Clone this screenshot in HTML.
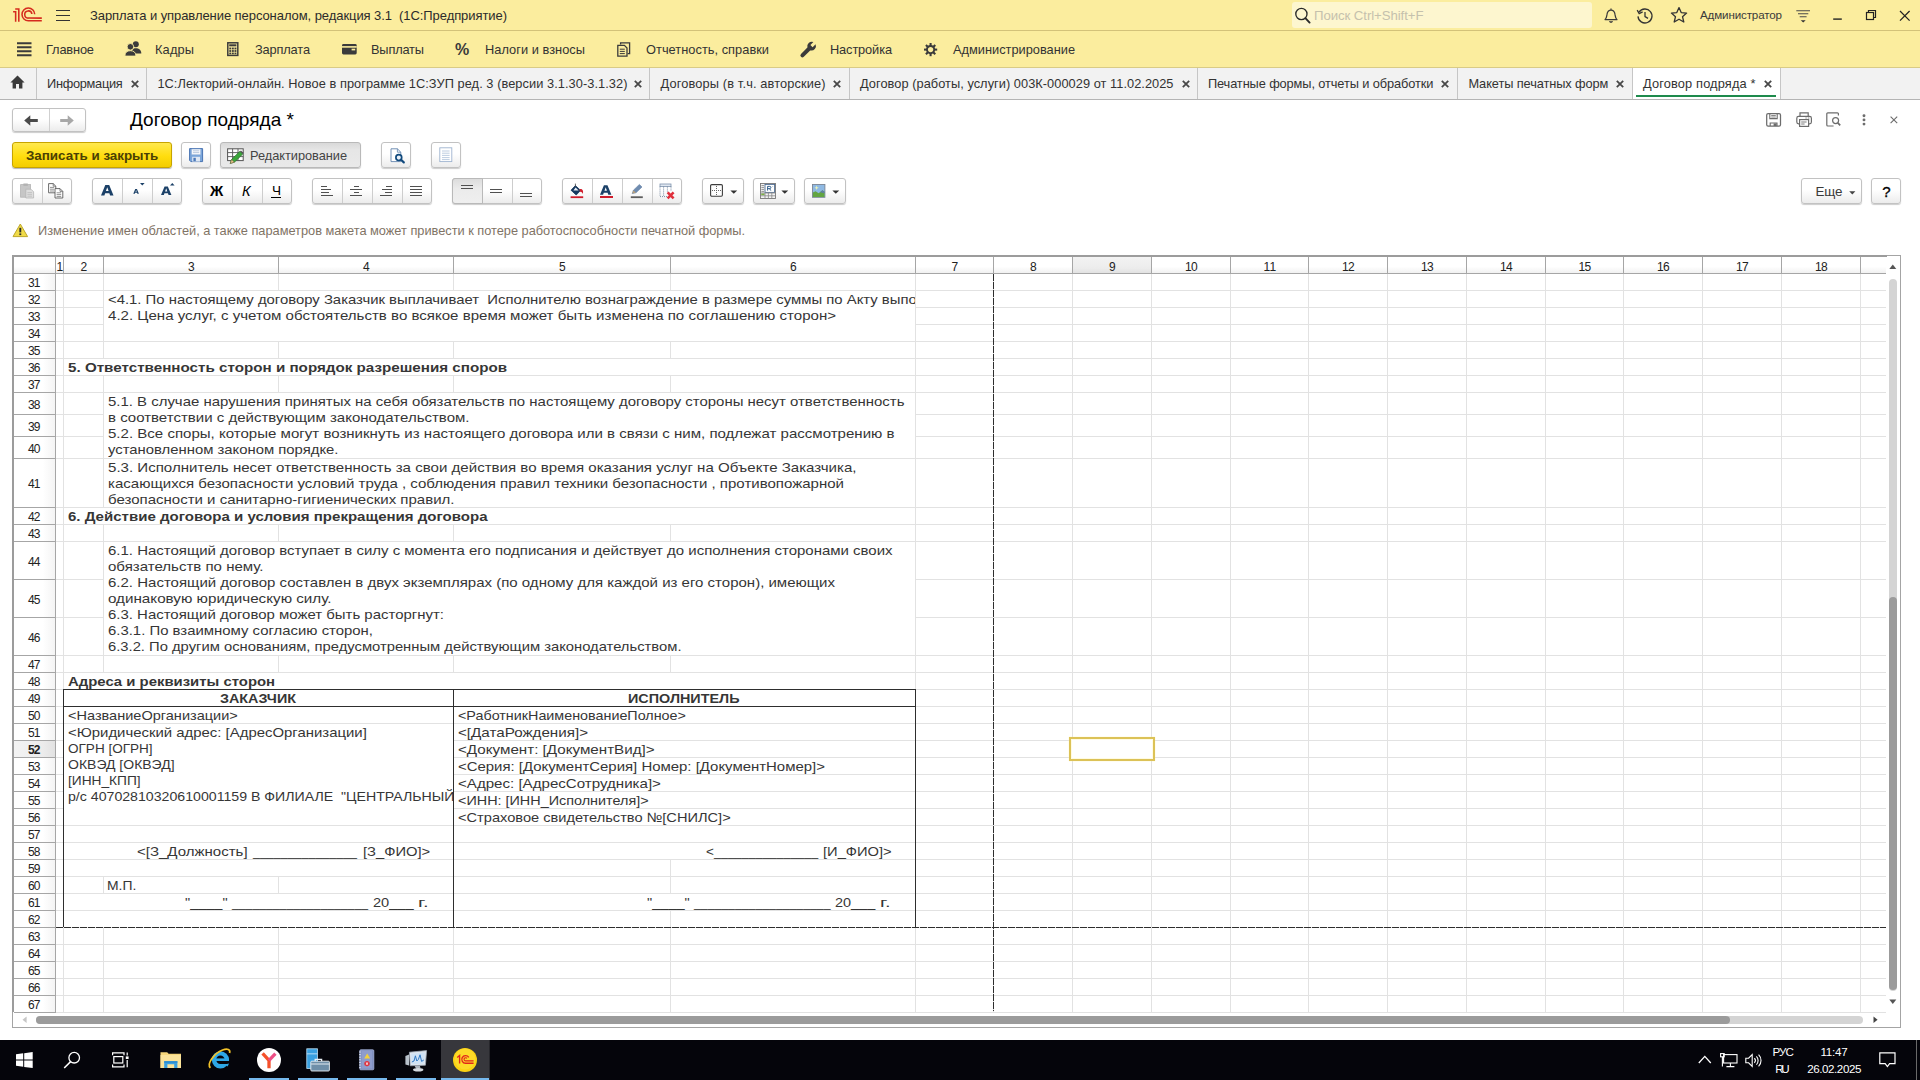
<!DOCTYPE html>
<html lang="ru"><head><meta charset="utf-8"><title>Договор подряда * - 1С:Предприятие</title>
<style>
html,body{margin:0;padding:0;width:1920px;height:1080px;overflow:hidden;background:#fff;font-family:"Liberation Sans",sans-serif;}
.t{position:absolute;white-space:pre;line-height:16px;font-family:"Liberation Sans",sans-serif;}
.btn{box-sizing:border-box;border:1px solid #c2c2c2;border-radius:3px;background:linear-gradient(#ffffff,#ffffff 45%,#ececec);box-shadow:0 1px 1px rgba(0,0,0,.2);}
.sep{position:absolute;width:1px;background:#c9c9c9;}
svg{overflow:visible}
.g i{position:absolute;display:block}

</style></head>
<body>
<div style="position:absolute;left:0px;top:0px;width:1920px;height:68px;background:#fbed9e;"></div>
<div style="position:absolute;left:0px;top:30px;width:1920px;height:1px;background:#d3c279;"></div>
<div style="position:absolute;left:0px;top:67px;width:1920px;height:1px;background:#d9cb86;"></div>
<svg style="position:absolute;left:0px;top:0px;" width="50" height="30" viewBox="0 0 50 30"><g fill="none" stroke="#d52b1e" stroke-width="1.55">
<path d="M13.1 11.8 H15.65 V21.8"/>
<path d="M15.2 9 H18.8 V21.8"/>
<path d="M34.7 14.2 A6.35 6.35 0 1 0 28.4 20.75 H41.8"/>
<path d="M31.9 14 A3.6 3.6 0 1 0 28.4 18.1 H41.8"/></g></svg>
<svg style="position:absolute;left:56px;top:9px;" width="15" height="13" viewBox="0 0 15 13"><g stroke="#333" stroke-width="1.2"><path d="M0 1.5H14M0 6.5H14M0 11.5H14"/></g></svg>
<span class="t" style="left:90.00px;top:8px;font-size:13px;color:#2b2b2b;letter-spacing:-0.069px;">Зарплата и управление персоналом, редакция 3.1  (1С:Предприятие)</span>
<div style="position:absolute;left:1292px;top:2px;width:300px;height:26px;background:#fdf6cf;border-radius:3px;"></div>
<svg style="position:absolute;left:1294px;top:6px;" width="18" height="18" viewBox="0 0 18 18"><circle cx="7.4" cy="8" r="5.6" fill="none" stroke="#2a2a2a" stroke-width="1.35"/><path d="M11.4 12.2 L15.6 16.6" stroke="#2a2a2a" stroke-width="1.9" stroke-linecap="round"/></svg>
<span class="t" style="left:1314.00px;top:8px;font-size:13.2px;color:#c5c1ad;letter-spacing:-0.062px;">Поиск Ctrl+Shift+F</span>
<svg style="position:absolute;left:1602px;top:6px;" width="18" height="19" viewBox="0 0 18 19"><path d="M9 2.6 V4 M3 13.6 C4.8 12 4.6 10.2 5 8.4 C5.4 5.6 7 4.2 9 4.2 C11 4.2 12.6 5.6 13 8.4 C13.4 10.2 13.2 12 15 13.6 Z" fill="none" stroke="#3a3a3a" stroke-width="1.25" stroke-linejoin="round"/><path d="M7.2 15.6 H10.8 L9 16.8 Z" fill="#3a3a3a" stroke="#3a3a3a" stroke-width="0.6"/></svg>
<svg style="position:absolute;left:1636px;top:7.2px;" width="18" height="18" viewBox="0 0 18 18"><path d="M3.1 5.2 A7 7 0 1 1 2 9.4" fill="none" stroke="#333" stroke-width="1.3"/><path d="M1.2 3.2 L3.2 6.6 L6.6 4.9" fill="none" stroke="#333" stroke-width="1.3"/><path d="M9 5 V9.6 L12 11.4" fill="none" stroke="#333" stroke-width="1.3"/></svg>
<svg style="position:absolute;left:1670px;top:6.2px;" width="18" height="18" viewBox="0 0 18 18"><path d="M9 1.6 L11.2 6.6 L16.6 7.1 L12.5 10.7 L13.8 16 L9 13.2 L4.2 16 L5.5 10.7 L1.4 7.1 L6.8 6.6 Z" fill="none" stroke="#333" stroke-width="1.3" stroke-linejoin="round"/></svg>
<span class="t" style="left:1700.00px;top:7px;font-size:11.6px;color:#3a3a3a;letter-spacing:-0.138px;">Администратор</span>
<svg style="position:absolute;left:1795px;top:8px;" width="17" height="16" viewBox="0 0 17 16"><path d="M1.3 2.7H15M3 5.8H13.3M4.7 8.8H11.6" stroke="#4a4a4a" stroke-width="1.1"/><path d="M5.7 12.2 H10.7 L8.2 14.6 Z" fill="#333"/></svg>
<svg style="position:absolute;left:1832px;top:9.2px;" width="12" height="12" viewBox="0 0 12 12"><path d="M1.2 10.1H9.8" stroke="#222" stroke-width="1.4"/></svg>
<svg style="position:absolute;left:1865.4px;top:9.4px;" width="12" height="12" viewBox="0 0 12 12"><path d="M3.5 3.5V1.5H10.5V8.5H8.5" fill="none" stroke="#222" stroke-width="1.2"/><rect x="1.5" y="3.5" width="7" height="7" fill="none" stroke="#222" stroke-width="1.2"/></svg>
<svg style="position:absolute;left:1899.4px;top:9.6px;" width="12" height="12" viewBox="0 0 12 12"><path d="M1 1L10.6 10.6M10.6 1L1 10.6" stroke="#222" stroke-width="1.25"/></svg>
<svg style="position:absolute;left:17px;top:42px;" width="15" height="14" viewBox="0 0 15 14"><path d="M0 1.2H14.5M0 5.2H14.5M0 9.2H14.5M0 13.2H14.5" stroke="#3b3b3b" stroke-width="1.9"/></svg>
<span class="t" style="left:46.00px;top:42px;font-size:12.8px;color:#333;letter-spacing:-0.151px;">Главное</span>
<svg style="position:absolute;left:120px;top:38px;" width="24" height="20" viewBox="0 0 24 20"><g fill="#3b3b3b"><circle cx="15.8" cy="6.2" r="3"/><path d="M11.4 15.5 C11.4 11.8 13 10.2 15.8 10.2 C18.8 10.2 21.3 11.8 21.3 15.5 Z"/><g stroke="#fbed9e" stroke-width="0.9"><circle cx="10.4" cy="8.8" r="3.3"/><path d="M4.9 18.1 C4.9 14.4 7 12.7 10.4 12.7 C13.8 12.7 15.9 14.4 15.9 18.1 Z"/></g></g></svg>
<span class="t" style="left:155.00px;top:42px;font-size:12.8px;color:#333;letter-spacing:0.160px;">Кадры</span>
<svg style="position:absolute;left:227px;top:42px;" width="12" height="15" viewBox="0 0 12 15"><rect x="0.8" y="0.8" width="10" height="12.6" fill="none" stroke="#3b3b3b" stroke-width="1.5"/><rect x="2.2" y="2.3" width="7.2" height="2" fill="#3b3b3b"/><g fill="#3b3b3b"><rect x="2.3" y="5.6" width="1.9" height="1.8"/><rect x="4.9" y="5.6" width="1.9" height="1.8"/><rect x="7.5" y="5.6" width="1.9" height="1.8"/><rect x="2.3" y="8.1" width="1.9" height="1.8"/><rect x="4.9" y="8.1" width="1.9" height="1.8"/><rect x="7.5" y="8.1" width="1.9" height="1.8"/><rect x="2.3" y="10.6" width="1.9" height="1.6"/><rect x="4.9" y="10.6" width="1.9" height="1.6"/><rect x="7.5" y="10.6" width="1.9" height="1.6"/></g></svg>
<span class="t" style="left:255.00px;top:42px;font-size:12.8px;color:#333;letter-spacing:-0.147px;">Зарплата</span>
<svg style="position:absolute;left:341.6px;top:44px;" width="16" height="11" viewBox="0 0 16 11"><rect x="0" y="0" width="14.7" height="10.4" rx="1.4" fill="#3b3b3b"/><rect x="0" y="2.1" width="14.7" height="1.6" fill="#fbed9e"/><rect x="9.6" y="4.7" width="3.6" height="1.7" fill="#fbed9e"/></svg>
<span class="t" style="left:371.00px;top:42px;font-size:12.8px;color:#333;letter-spacing:-0.172px;">Выплаты</span>
<span class="t" style="left:455.00px;top:42px;font-size:16px;color:#3b3b3b;font-weight:bold;">%</span>
<span class="t" style="left:485.00px;top:42px;font-size:12.8px;color:#333;letter-spacing:0.038px;">Налоги и взносы</span>
<svg style="position:absolute;left:617px;top:42px;" width="14" height="15" viewBox="0 0 14 15"><g fill="none" stroke="#3b3b3b" stroke-width="1.3"><path d="M3.6 2.6 V0.8 H12.6 V11.6 H10.6"/><path d="M0.8 3.4 H7.4 L10 6 V14.2 H0.8 Z"/><path d="M2.8 7.2H7.8M2.8 9.4H7.8M2.8 11.6H7.8" stroke-width="1"/></g></svg>
<span class="t" style="left:646.00px;top:42px;font-size:12.8px;color:#333;letter-spacing:0.035px;">Отчетность, справки</span>
<svg style="position:absolute;left:800px;top:41px;" width="17" height="17" viewBox="0 0 17 17"><path d="M15.6 3.2 L12.6 6.2 L10.4 4 L13.4 1 A4.6 4.6 0 0 0 7.4 6.6 L1 13 A1.8 1.8 0 0 0 3.8 15.8 L10.2 9.4 A4.6 4.6 0 0 0 15.6 3.2 Z" fill="#3b3b3b"/></svg>
<span class="t" style="left:830.00px;top:42px;font-size:12.8px;color:#333;letter-spacing:-0.125px;">Настройка</span>
<svg style="position:absolute;left:924.4px;top:43px;" width="13.2" height="13.2" viewBox="0 0 16.6 16.6"><rect x="7" y="0" width="2.6" height="4" fill="#3b3b3b" transform="rotate(0 8.3 8.3)"/><rect x="7" y="0" width="2.6" height="4" fill="#3b3b3b" transform="rotate(45 8.3 8.3)"/><rect x="7" y="0" width="2.6" height="4" fill="#3b3b3b" transform="rotate(90 8.3 8.3)"/><rect x="7" y="0" width="2.6" height="4" fill="#3b3b3b" transform="rotate(135 8.3 8.3)"/><rect x="7" y="0" width="2.6" height="4" fill="#3b3b3b" transform="rotate(180 8.3 8.3)"/><rect x="7" y="0" width="2.6" height="4" fill="#3b3b3b" transform="rotate(225 8.3 8.3)"/><rect x="7" y="0" width="2.6" height="4" fill="#3b3b3b" transform="rotate(270 8.3 8.3)"/><rect x="7" y="0" width="2.6" height="4" fill="#3b3b3b" transform="rotate(315 8.3 8.3)"/><circle cx="8.3" cy="8.3" r="4.6" fill="none" stroke="#3b3b3b" stroke-width="2.4"/></svg>
<span class="t" style="left:953.00px;top:42px;font-size:12.8px;color:#333;letter-spacing:-0.002px;">Администрирование</span>
<div style="position:absolute;left:0px;top:68px;width:1920px;height:31px;background:#f2f2f2;"></div>
<div style="position:absolute;left:0px;top:99px;width:1920px;height:1px;background:#b4b4b4;"></div>
<div style="position:absolute;left:36px;top:68px;width:1px;height:31px;background:#c6c6c6;"></div>
<div style="position:absolute;left:146px;top:68px;width:1px;height:31px;background:#c6c6c6;"></div>
<div style="position:absolute;left:649px;top:68px;width:1px;height:31px;background:#c6c6c6;"></div>
<div style="position:absolute;left:849px;top:68px;width:1px;height:31px;background:#c6c6c6;"></div>
<div style="position:absolute;left:1197px;top:68px;width:1px;height:31px;background:#c6c6c6;"></div>
<div style="position:absolute;left:1457px;top:68px;width:1px;height:31px;background:#c6c6c6;"></div>
<div style="position:absolute;left:1632px;top:68px;width:1px;height:31px;background:#c6c6c6;"></div>
<div style="position:absolute;left:1780px;top:68px;width:1px;height:31px;background:#c6c6c6;"></div>
<div style="position:absolute;left:1633px;top:68px;width:147px;height:31px;background:#ffffff;"></div>
<div style="position:absolute;left:1636px;top:95px;width:140px;height:2px;background:#1e8a4c;"></div>
<svg style="position:absolute;left:10px;top:75px;" width="15" height="14" viewBox="0 0 15 14"><path d="M7.5 0.6 L0.4 7.4 H2.6 V13.4 H6 V9 H9 V13.4 H12.4 V7.4 H14.6 Z" fill="#3b3b3b"/></svg>
<span class="t" style="left:47.10px;top:76px;font-size:12.8px;color:#333;letter-spacing:-0.307px;">Информация</span>
<svg style="position:absolute;left:130.7px;top:79.5px;" width="8" height="8" viewBox="0 0 8 8"><path d="M0.8 0.8L7.2 7.2M7.2 0.8L0.8 7.2" stroke="#484848" stroke-width="1.8"/></svg>
<span class="t" style="left:157.40px;top:76px;font-size:12.8px;color:#333;letter-spacing:0.056px;">1С:Лекторий-онлайн. Новое в программе 1С:ЗУП ред. 3 (версии 3.1.30-3.1.32)</span>
<svg style="position:absolute;left:634px;top:79.5px;" width="8" height="8" viewBox="0 0 8 8"><path d="M0.8 0.8L7.2 7.2M7.2 0.8L0.8 7.2" stroke="#484848" stroke-width="1.8"/></svg>
<span class="t" style="left:660.60px;top:76px;font-size:12.8px;color:#333;letter-spacing:0.132px;">Договоры (в т.ч. авторские)</span>
<svg style="position:absolute;left:833.3px;top:79.5px;" width="8" height="8" viewBox="0 0 8 8"><path d="M0.8 0.8L7.2 7.2M7.2 0.8L0.8 7.2" stroke="#484848" stroke-width="1.8"/></svg>
<span class="t" style="left:860.00px;top:76px;font-size:12.8px;color:#333;letter-spacing:0.040px;">Договор (работы, услуги) 003К-000029 от 11.02.2025</span>
<svg style="position:absolute;left:1181.5px;top:79.5px;" width="8" height="8" viewBox="0 0 8 8"><path d="M0.8 0.8L7.2 7.2M7.2 0.8L0.8 7.2" stroke="#484848" stroke-width="1.8"/></svg>
<span class="t" style="left:1207.90px;top:76px;font-size:12.8px;color:#333;letter-spacing:-0.103px;">Печатные формы, отчеты и обработки</span>
<svg style="position:absolute;left:1441.4px;top:79.5px;" width="8" height="8" viewBox="0 0 8 8"><path d="M0.8 0.8L7.2 7.2M7.2 0.8L0.8 7.2" stroke="#484848" stroke-width="1.8"/></svg>
<span class="t" style="left:1468.40px;top:76px;font-size:12.8px;color:#333;letter-spacing:-0.091px;">Макеты печатных форм</span>
<svg style="position:absolute;left:1616.4px;top:79.5px;" width="8" height="8" viewBox="0 0 8 8"><path d="M0.8 0.8L7.2 7.2M7.2 0.8L0.8 7.2" stroke="#484848" stroke-width="1.8"/></svg>
<span class="t" style="left:1643.00px;top:76px;font-size:12.8px;color:#333;letter-spacing:0.147px;">Договор подряда *</span>
<svg style="position:absolute;left:1763.5px;top:79.5px;" width="8" height="8" viewBox="0 0 8 8"><path d="M0.8 0.8L7.2 7.2M7.2 0.8L0.8 7.2" stroke="#484848" stroke-width="1.8"/></svg>
<div class="btn" style="position:absolute;left:12px;top:108px;width:74px;height:24px;"></div>
<div style="position:absolute;left:49px;top:109px;width:1px;height:22px;background:#d0d0d0;"></div>
<svg style="position:absolute;left:0px;top:0px;" width="100" height="140" viewBox="0 0 100 140"><path d="M24.2 120.5 L30.3 115.2 V119 H37.8 V122 H30.3 V125.8 Z" fill="#4a4a4a"/><path d="M73.8 120.5 L67.7 115.2 V119 H60.2 V122 H67.7 V125.8 Z" fill="#a8a8a8"/></svg>
<span class="t" style="left:130.00px;top:112px;font-size:19px;color:#000;letter-spacing:0.030px;">Договор подряда *</span>
<svg style="position:absolute;left:1766px;top:113px;" width="16" height="14" viewBox="0 0 16 14"><rect x="0.7" y="0.7" width="13.8" height="12.4" rx="1.4" fill="none" stroke="#6c6c6c" stroke-width="1.25"/><path d="M3.8 0.9 V5.6 H11.2 V0.9" fill="none" stroke="#6c6c6c" stroke-width="1.1"/><path d="M5.2 2.5H9.8M5.2 4H9.8" stroke="#6c6c6c" stroke-width="0.8"/><path d="M4.2 13 V10 H11 V13" fill="none" stroke="#6c6c6c" stroke-width="1.1"/><rect x="7.6" y="10.4" width="3" height="2.6" fill="#6c6c6c"/></svg>
<svg style="position:absolute;left:1796px;top:112px;" width="17" height="15" viewBox="0 0 17 15"><g fill="none" stroke="#6c6c6c" stroke-width="1.2"><path d="M4 4.6 V0.8 H12.2 V4.6"/><rect x="0.8" y="4.4" width="14.6" height="7.4" rx="1.8"/><rect x="3.6" y="7.6" width="9" height="6.8" fill="#fff"/><path d="M5.2 10H10.6M5.2 12H8.6" stroke-width="0.9"/><path d="M9.4 6H10.8M11.8 6H13.4" stroke-width="0.8"/></g></svg>
<svg style="position:absolute;left:1826px;top:112px;" width="16" height="15" viewBox="0 0 16 15"><g fill="none" stroke="#6c6c6c" stroke-width="1.2"><path d="M12.4 3.6 V1.8 Q12.4 0.8 11.4 0.8 H1.8 Q0.8 0.8 0.8 1.8 V13 Q0.8 14 1.8 14 H7.6"/><circle cx="9.6" cy="8.6" r="3"/><path d="M11.8 10.8 L14.2 13.4" stroke-width="1.7"/></g></svg>
<svg style="position:absolute;left:1861.6px;top:113.6px;" width="4" height="13" viewBox="0 0 4 13"><circle cx="2" cy="1.7" r="1.45" fill="#6c6c6c"/><circle cx="2" cy="5.9" r="1.45" fill="#6c6c6c"/><circle cx="2" cy="10.1" r="1.45" fill="#6c6c6c"/></svg>
<svg style="position:absolute;left:1889.6px;top:115.6px;" width="8" height="8" viewBox="0 0 8 8"><path d="M0.6 0.6L7.2 7.2M7.2 0.6L0.6 7.2" stroke="#6c6c6c" stroke-width="1.1"/></svg>
<div style="position:absolute;left:12px;top:142px;width:160px;height:26px;border:1px solid #c7a400;border-radius:3px;box-sizing:border-box;background:linear-gradient(#ffe94f,#ffdd0e 55%,#f3cd00);box-shadow:0 1px 1px rgba(0,0,0,.3);"></div>
<span class="t" style="left:26.00px;top:148px;font-size:13.4px;color:#4a4004;letter-spacing:-0.025px;font-weight:bold;">Записать и закрыть</span>
<div class="btn" style="position:absolute;left:181px;top:142px;width:30px;height:26px;"></div>
<svg style="position:absolute;left:189.2px;top:148px;" width="15" height="15" viewBox="0 0 15 15"><path d="M0.6 0.6 H13.6 V13.6 H1.8 L0.6 12.4 Z" fill="#7ba6da" stroke="#4873b2" stroke-width="1"/><rect x="2.8" y="1.1" width="8.6" height="5.4" fill="#f7f9fc" stroke="#b4c6df" stroke-width="0.5"/><path d="M4 2.8H10.2M4 4.6H10.2" stroke="#a9bcd6" stroke-width="0.8"/><rect x="3.2" y="8.8" width="7.8" height="4.8" fill="#dfe8f4"/><rect x="4.4" y="9.8" width="2.4" height="3.4" fill="#4d79b8"/></svg>
<div style="position:absolute;left:220px;top:142px;width:141px;height:26px;border:1px solid #b9b9b9;border-radius:3px;box-sizing:border-box;background:linear-gradient(#d9d9d9,#e6e6e6 30%,#e9e9e9);box-shadow:0 1px 1px rgba(0,0,0,.22);"></div>
<svg style="position:absolute;left:227px;top:148px;" width="17" height="16" viewBox="0 0 17 16"><rect x="0.6" y="0.8" width="15.6" height="11.8" fill="#fff" stroke="#555" stroke-width="1"/><path d="M0.6 4.6H16.2M0.6 8.6H16.2M5.6 0.8V12.6M11 0.8V12.6" stroke="#555" stroke-width="0.9"/><path d="M3.2 15.4 L4.6 11.4 L13 3.2 L15.8 6 L7.4 14.2 Z" fill="#3aa63a" stroke="#2c6b2c" stroke-width="0.7"/><path d="M3.2 15.4 L4.6 11.4 L7.4 14.2 Z" fill="#e8c38a" stroke="#6d5a3a" stroke-width="0.5"/><path d="M13 3.2 L15.8 6 L16.6 5 L14 2.4 Z" fill="#555"/></svg>
<span class="t" style="left:250.00px;top:148px;font-size:12.8px;color:#444;letter-spacing:-0.037px;">Редактирование</span>
<div class="btn" style="position:absolute;left:381px;top:142px;width:30px;height:26px;"></div>
<svg style="position:absolute;left:389.6px;top:147.6px;" width="16" height="16" viewBox="0 0 16 16"><path d="M1 0.8 H7.4 L10.8 4.2 V13.6 H1 Z" fill="#fff" stroke="#6385ad" stroke-width="0.9"/><path d="M7.4 0.8 V4.2 H10.8" fill="none" stroke="#6385ad" stroke-width="0.8"/><circle cx="8.8" cy="9.6" r="2.9" fill="#e9f1fa" stroke="#114a7d" stroke-width="1.7"/><path d="M11 11.8 L13.8 14.4" stroke="#114a7d" stroke-width="2.2" stroke-linecap="round"/></svg>
<div class="btn" style="position:absolute;left:431px;top:142px;width:30px;height:26px;"></div>
<svg style="position:absolute;left:439px;top:147px;" width="14" height="16" viewBox="0 0 14 16"><rect x="0.8" y="0.8" width="12" height="13.8" fill="#fff" stroke="#9eb3cf" stroke-width="0.9"/><path d="M3 4H10.6M3 6.2H10.6M3 8.4H10.6M3 10.6H10.6M3 12.6H10.6" stroke="#b5c6dc" stroke-width="0.9"/></svg>
<div class="btn" style="position:absolute;left:12px;top:178px;width:60px;height:26px;"></div>
<div style="position:absolute;left:42px;top:179px;width:1px;height:24px;background:#cdcdcd;"></div>
<div class="btn" style="position:absolute;left:92px;top:178px;width:90px;height:26px;"></div>
<div style="position:absolute;left:122px;top:179px;width:1px;height:24px;background:#cdcdcd;"></div>
<div style="position:absolute;left:152px;top:179px;width:1px;height:24px;background:#cdcdcd;"></div>
<div class="btn" style="position:absolute;left:202px;top:178px;width:90px;height:26px;"></div>
<div style="position:absolute;left:232px;top:179px;width:1px;height:24px;background:#cdcdcd;"></div>
<div style="position:absolute;left:262px;top:179px;width:1px;height:24px;background:#cdcdcd;"></div>
<div class="btn" style="position:absolute;left:312px;top:178px;width:120px;height:26px;"></div>
<div style="position:absolute;left:342px;top:179px;width:1px;height:24px;background:#cdcdcd;"></div>
<div style="position:absolute;left:372px;top:179px;width:1px;height:24px;background:#cdcdcd;"></div>
<div style="position:absolute;left:402px;top:179px;width:1px;height:24px;background:#cdcdcd;"></div>
<div class="btn" style="position:absolute;left:452px;top:178px;width:90px;height:26px;"></div>
<div style="position:absolute;left:482px;top:179px;width:1px;height:24px;background:#cdcdcd;"></div>
<div style="position:absolute;left:512px;top:179px;width:1px;height:24px;background:#cdcdcd;"></div>
<div class="btn" style="position:absolute;left:562px;top:178px;width:120px;height:26px;"></div>
<div style="position:absolute;left:592px;top:179px;width:1px;height:24px;background:#cdcdcd;"></div>
<div style="position:absolute;left:622px;top:179px;width:1px;height:24px;background:#cdcdcd;"></div>
<div style="position:absolute;left:652px;top:179px;width:1px;height:24px;background:#cdcdcd;"></div>
<div style="position:absolute;left:452px;top:178px;width:31px;height:26px;box-sizing:border-box;border:1px solid #b9b9b9;border-radius:3px 0 0 3px;background:linear-gradient(#dcdcdc,#ebebeb 40%,#efefef);"></div>
<div class="btn" style="position:absolute;left:702px;top:178px;width:42px;height:26px;"></div>
<svg style="position:absolute;left:730px;top:190px;" width="8" height="5" viewBox="0 0 8 5"><path d="M0.4 0.4H7.2L3.8 3.8Z" fill="#333"/></svg>
<div class="btn" style="position:absolute;left:753px;top:178px;width:42px;height:26px;"></div>
<svg style="position:absolute;left:781px;top:190px;" width="8" height="5" viewBox="0 0 8 5"><path d="M0.4 0.4H7.2L3.8 3.8Z" fill="#333"/></svg>
<div class="btn" style="position:absolute;left:804px;top:178px;width:42px;height:26px;"></div>
<svg style="position:absolute;left:832px;top:190px;" width="8" height="5" viewBox="0 0 8 5"><path d="M0.4 0.4H7.2L3.8 3.8Z" fill="#333"/></svg>
<svg style="position:absolute;left:20px;top:183px;" width="15" height="16" viewBox="0 0 15 16"><rect x="0.6" y="1.6" width="10" height="12.6" fill="#c6c6c6" stroke="#b4b4b4" stroke-width="0.8"/><rect x="3.4" y="0.5" width="4.4" height="2.4" fill="#b2b2b2"/><path d="M5.8 6.2 H11 L13.6 8.8 V15 H5.8 Z" fill="#dedede" stroke="#b6b6b6" stroke-width="0.8"/><path d="M7.4 9.6H12M7.4 11.4H12M7.4 13.2H12" stroke="#bcbcbc" stroke-width="0.8"/></svg>
<svg style="position:absolute;left:47.6px;top:183px;" width="16" height="16" viewBox="0 0 16 16"><g fill="#fff" stroke="#5a5a5a" stroke-width="0.9"><path d="M0.6 0.6 H5.2 L7.8 3.2 V9.8 H0.6 Z"/><path d="M5.2 0.6 V3.2 H7.8" fill="none" stroke-width="0.7"/><path d="M7 5.6 H12 L14.8 8.4 V15 H7 Z"/><path d="M12 5.6 V8.4 H14.8" fill="none" stroke-width="0.7"/></g><path d="M2 4.4H6.2M2 6.2H6.2M2 8H6M8.6 9.8H13.2M8.6 11.6H13.2M8.6 13.4H13.2" stroke="#777" stroke-width="0.8"/></svg>
<svg style="position:absolute;left:101.4px;top:185.4px;" width="12.5" height="10.5" viewBox="0 0 12.5 10.5"><path d="M0 10.5 L4.3 0 H8.2 L12.5 10.5 H9.1 L8.35 8.3 H4.15 L3.4 10.5 Z M4.9 6.1 H7.6 L6.25 2.3 Z" fill="#1c4168" fill-rule="evenodd"/></svg>
<svg style="position:absolute;left:133.1px;top:189.0px;" width="6.2" height="4.7" viewBox="0 0 12.5 10.5"><path d="M0 10.5 L4.3 0 H8.2 L12.5 10.5 H9.1 L8.35 8.3 H4.15 L3.4 10.5 Z M4.9 6.1 H7.6 L6.25 2.3 Z" fill="#1c4168" fill-rule="evenodd"/></svg>
<svg style="position:absolute;left:139.6px;top:183.4px;" width="5" height="3" viewBox="0 0 5 3"><path d="M0 0.1H4.6L2.3 2.5Z" fill="#1c4168"/></svg>
<svg style="position:absolute;left:160.6px;top:186.4px;" width="10.4" height="9.5" viewBox="0 0 12.5 10.5"><path d="M0 10.5 L4.3 0 H8.2 L12.5 10.5 H9.1 L8.35 8.3 H4.15 L3.4 10.5 Z M4.9 6.1 H7.6 L6.25 2.3 Z" fill="#1c4168" fill-rule="evenodd"/></svg>
<svg style="position:absolute;left:169.7px;top:183.3px;" width="5" height="3" viewBox="0 0 5 3"><path d="M0 2.5H4.6L2.3 0.1Z" fill="#1c4168"/></svg>
<span class="t" style="left:210.00px;top:183px;font-size:14.6px;color:#000;font-weight:bold;">Ж</span>
<span class="t" style="left:242.00px;top:183px;font-size:14.6px;color:#000;font-style:italic;">К</span>
<span class="t" style="left:272.00px;top:183px;font-size:13.6px;color:#000;">Ч</span>
<div style="position:absolute;left:271px;top:197px;width:10px;height:1px;background:#000;"></div>
<div style="position:absolute;left:321px;top:186px;width:6px;height:1px;background:#505050;"></div>
<div style="position:absolute;left:321px;top:189px;width:10px;height:1px;background:#505050;"></div>
<div style="position:absolute;left:321px;top:192px;width:8px;height:1px;background:#505050;"></div>
<div style="position:absolute;left:321px;top:195px;width:12px;height:1px;background:#505050;"></div>
<div style="position:absolute;left:354px;top:186px;width:5px;height:1px;background:#505050;"></div>
<div style="position:absolute;left:350px;top:189px;width:12px;height:1px;background:#505050;"></div>
<div style="position:absolute;left:354px;top:192px;width:5px;height:1px;background:#505050;"></div>
<div style="position:absolute;left:350px;top:195px;width:12px;height:1px;background:#505050;"></div>
<div style="position:absolute;left:386px;top:186px;width:6px;height:1px;background:#505050;"></div>
<div style="position:absolute;left:382px;top:189px;width:10px;height:1px;background:#505050;"></div>
<div style="position:absolute;left:385px;top:192px;width:7px;height:1px;background:#505050;"></div>
<div style="position:absolute;left:380px;top:195px;width:12px;height:1px;background:#505050;"></div>
<div style="position:absolute;left:410px;top:186px;width:12px;height:1px;background:#505050;"></div>
<div style="position:absolute;left:410px;top:189px;width:12px;height:1px;background:#505050;"></div>
<div style="position:absolute;left:410px;top:192px;width:12px;height:1px;background:#505050;"></div>
<div style="position:absolute;left:410px;top:195px;width:12px;height:1px;background:#505050;"></div>
<div style="position:absolute;left:461px;top:185px;width:12px;height:1px;background:#505050;"></div>
<div style="position:absolute;left:461px;top:188px;width:12px;height:1px;background:#505050;"></div>
<div style="position:absolute;left:490px;top:189px;width:12px;height:1px;background:#505050;"></div>
<div style="position:absolute;left:490px;top:192px;width:12px;height:1px;background:#505050;"></div>
<div style="position:absolute;left:520px;top:193px;width:12px;height:1px;background:#505050;"></div>
<div style="position:absolute;left:520px;top:196px;width:12px;height:1px;background:#505050;"></div>
<svg style="position:absolute;left:570px;top:182.6px;" width="15" height="17" viewBox="0 0 15 17"><path d="M5.4 2.6 L10.6 7.4 L6.2 12 L1 7.2 Z" fill="#16395f" stroke="#16395f" stroke-width="0.8" stroke-linejoin="round"/><path d="M5.6 4.6 L8.6 7.4 H3.4 Z" fill="#e8eef6"/><path d="M5.4 0.6 V3.4" stroke="#555" stroke-width="0.9"/><path d="M9.6 6.2 C12.8 5.4 13.6 8.4 12.8 11 C12.2 9.4 11.4 8.6 9.8 8.8 Z" fill="#d0202e"/><rect x="0.6" y="13.3" width="12.6" height="1.8" fill="#cf1c2b"/></svg>
<svg style="position:absolute;left:600.4px;top:185.2px;" width="11.4" height="9.9" viewBox="0 0 12.5 10.5"><path d="M0 10.5 L4.3 0 H8.2 L12.5 10.5 H9.1 L8.35 8.3 H4.15 L3.4 10.5 Z M4.9 6.1 H7.6 L6.25 2.3 Z" fill="#1c4168" fill-rule="evenodd"/></svg>
<div style="position:absolute;left:600px;top:196px;width:12.6px;height:1.8px;background:#cf1c2b;"></div>
<svg style="position:absolute;left:630px;top:182.6px;" width="15" height="17" viewBox="0 0 15 17"><path d="M2.2 10.6 L3.4 7.2 L9.4 1.4 L12 4 L6 9.8 Z" fill="#6f8cb0" stroke="#56749c" stroke-width="0.5"/><path d="M2.2 10.6 L3.4 7.2 L6 9.8 Z" fill="#b79f7c"/><rect x="0.8" y="13.3" width="12" height="1.8" fill="#5e5e5e"/></svg>
<svg style="position:absolute;left:659px;top:183px;" width="17" height="17" viewBox="0 0 17 17"><rect x="1" y="1" width="11" height="2.6" fill="#dfe7f1" stroke="#7f93ad" stroke-width="0.8"/><path d="M1 3.6V13.6H8M4.6 3.6V13.6M8.4 3.6V9M12 3.6V8" fill="none" stroke="#6b7f99" stroke-width="0.9" stroke-dasharray="1 1"/><path d="M8.6 9.4L14.6 15.4M14.6 9.4L8.6 15.4" stroke="#e0303c" stroke-width="2.6"/></svg>
<svg style="position:absolute;left:710px;top:184px;" width="13" height="13" viewBox="0 0 13 13"><rect x="0.6" y="0.6" width="11.8" height="11.6" rx="1.2" fill="#fff" stroke="#3c3c3c" stroke-width="1.1"/></svg>
<div style="position:absolute;left:716px;top:186px;width:1px;height:1px;background:#666;"></div>
<div style="position:absolute;left:712px;top:190px;width:1px;height:1px;background:#666;"></div>
<div style="position:absolute;left:716px;top:188px;width:1px;height:1px;background:#666;"></div>
<div style="position:absolute;left:714px;top:190px;width:1px;height:1px;background:#666;"></div>
<div style="position:absolute;left:716px;top:190px;width:1px;height:1px;background:#666;"></div>
<div style="position:absolute;left:716px;top:192px;width:1px;height:1px;background:#666;"></div>
<div style="position:absolute;left:718px;top:190px;width:1px;height:1px;background:#666;"></div>
<div style="position:absolute;left:716px;top:194px;width:1px;height:1px;background:#666;"></div>
<div style="position:absolute;left:720px;top:190px;width:1px;height:1px;background:#666;"></div>
<svg style="position:absolute;left:760px;top:183px;" width="16" height="16" viewBox="0 0 16 16"><rect x="0.5" y="0.5" width="15" height="15" fill="#f4f4f4" stroke="#777" stroke-width="0.9"/><rect x="5" y="1.4" width="9.6" height="8" fill="#fff" stroke="#4a6a92" stroke-width="0.9"/><path d="M7.6 7.6V3.4H9.8 A1.1 1.1 0 0 1 9.8 5.6 H7.6 M9.6 5.6 L10.8 7.6" fill="none" stroke="#1d4f80" stroke-width="0.9"/><path d="M12.6 3.6V3.7M12.6 6.4V6.5" stroke="#1d4f80" stroke-width="1.2"/><path d="M1.4 2.6H4M1.4 4.6H4M1.4 6.6H4M1.4 8.6H4" stroke="#888" stroke-width="0.9"/><rect x="1.2" y="10.4" width="3.4" height="1.8" fill="#7cb342"/><path d="M1 12.8H15M1 10H15M5 10V15.4M8.4 10V15.4M11.8 10V15.4" stroke="#888" stroke-width="0.8"/></svg>
<svg style="position:absolute;left:812px;top:184px;" width="14" height="14" viewBox="0 0 14 14"><rect x="0.5" y="0.5" width="12.4" height="12.8" fill="#8fb9e3" stroke="#7a8594" stroke-width="0.9"/><path d="M0.9 13 V8.6 L3.6 7.2 L6.6 9.2 L10.4 6.2 L12.5 7.8 V13 Z" fill="#63a542"/><path d="M8 8.2 L10.4 6.2 L12.5 7.8 V9.2 Z" fill="#5f7fa8"/><path d="M4.6 1.6 L5.2 3.2 L6.8 3.8 L5.2 4.4 L4.6 6 L4 4.4 L2.4 3.8 L4 3.2Z" fill="#e9f3b8"/></svg>
<div class="btn" style="position:absolute;left:1801px;top:178px;width:61px;height:26px;"></div>
<span class="t" style="left:1815.40px;top:184px;font-size:13.4px;color:#3a3a3a;letter-spacing:-0.125px;">Еще</span>
<svg style="position:absolute;left:1849px;top:191px;" width="7" height="4" viewBox="0 0 7 4"><path d="M0.2 0.3H6.4L3.3 3.4Z" fill="#444"/></svg>
<div class="btn" style="position:absolute;left:1871px;top:178px;width:30px;height:26px;"></div>
<span class="t" style="left:1882.20px;top:184px;font-size:15px;color:#000;-webkit-text-stroke:0.35px #000;">?</span>
<svg style="position:absolute;left:12px;top:222px;" width="17" height="16" viewBox="0 0 17 16"><path d="M8.3 2 L15.6 14.6 H1 Z" fill="#f0db48" stroke="#bda62b" stroke-width="1" stroke-linejoin="round"/><path d="M8.3 5.8 V10.4" stroke="#2b2b2b" stroke-width="1.9"/><rect x="7.35" y="11.4" width="1.9" height="1.7" fill="#2b2b2b"/></svg>
<span class="t" style="left:38.00px;top:223px;font-size:12.8px;color:#7f7365;letter-spacing:-0.018px;">Изменение имен областей, а также параметров макета может привести к потере работоспособности печатной формы.</span>
<div style="position:absolute;left:12px;top:255px;width:1889px;height:773px;box-sizing:border-box;border:1px solid #a4a4a4;background:#fff;"></div>
<div style="position:absolute;left:12px;top:255px;width:1875px;height:2px;background:#9c9c9c;"></div>
<div style="position:absolute;left:12px;top:255px;width:2px;height:757px;background:#9c9c9c;"></div>
<div class="g"><i style="left:56px;top:290px;width:1830px;height:1px;background:#e2e2e2"></i><i style="left:56px;top:307px;width:1830px;height:1px;background:#e2e2e2"></i><i style="left:56px;top:324px;width:1830px;height:1px;background:#e2e2e2"></i><i style="left:56px;top:341px;width:1830px;height:1px;background:#e2e2e2"></i><i style="left:56px;top:358px;width:1830px;height:1px;background:#e2e2e2"></i><i style="left:56px;top:375px;width:1830px;height:1px;background:#e2e2e2"></i><i style="left:56px;top:392px;width:1830px;height:1px;background:#e2e2e2"></i><i style="left:56px;top:414px;width:1830px;height:1px;background:#e2e2e2"></i><i style="left:56px;top:436px;width:1830px;height:1px;background:#e2e2e2"></i><i style="left:56px;top:458px;width:1830px;height:1px;background:#e2e2e2"></i><i style="left:56px;top:507px;width:1830px;height:1px;background:#e2e2e2"></i><i style="left:56px;top:524px;width:1830px;height:1px;background:#e2e2e2"></i><i style="left:56px;top:541px;width:1830px;height:1px;background:#e2e2e2"></i><i style="left:56px;top:579px;width:1830px;height:1px;background:#e2e2e2"></i><i style="left:56px;top:617px;width:1830px;height:1px;background:#e2e2e2"></i><i style="left:56px;top:655px;width:1830px;height:1px;background:#e2e2e2"></i><i style="left:56px;top:672px;width:1830px;height:1px;background:#e2e2e2"></i><i style="left:56px;top:689px;width:1830px;height:1px;background:#e2e2e2"></i><i style="left:56px;top:706px;width:1830px;height:1px;background:#e2e2e2"></i><i style="left:56px;top:723px;width:1830px;height:1px;background:#e2e2e2"></i><i style="left:56px;top:740px;width:1830px;height:1px;background:#e2e2e2"></i><i style="left:56px;top:757px;width:1830px;height:1px;background:#e2e2e2"></i><i style="left:56px;top:774px;width:1830px;height:1px;background:#e2e2e2"></i><i style="left:56px;top:791px;width:1830px;height:1px;background:#e2e2e2"></i><i style="left:56px;top:808px;width:1830px;height:1px;background:#e2e2e2"></i><i style="left:56px;top:825px;width:1830px;height:1px;background:#e2e2e2"></i><i style="left:56px;top:842px;width:1830px;height:1px;background:#e2e2e2"></i><i style="left:56px;top:859px;width:1830px;height:1px;background:#e2e2e2"></i><i style="left:56px;top:876px;width:1830px;height:1px;background:#e2e2e2"></i><i style="left:56px;top:893px;width:1830px;height:1px;background:#e2e2e2"></i><i style="left:56px;top:910px;width:1830px;height:1px;background:#e2e2e2"></i><i style="left:56px;top:927px;width:1830px;height:1px;background:#e2e2e2"></i><i style="left:56px;top:944px;width:1830px;height:1px;background:#e2e2e2"></i><i style="left:56px;top:961px;width:1830px;height:1px;background:#e2e2e2"></i><i style="left:56px;top:978px;width:1830px;height:1px;background:#e2e2e2"></i><i style="left:56px;top:995px;width:1830px;height:1px;background:#e2e2e2"></i><i style="left:56px;top:1012px;width:1830px;height:1px;background:#e2e2e2"></i><i style="left:63px;top:274px;width:1px;height:738px;background:#e2e2e2"></i><i style="left:103px;top:274px;width:1px;height:738px;background:#e2e2e2"></i><i style="left:278px;top:274px;width:1px;height:738px;background:#e2e2e2"></i><i style="left:453px;top:274px;width:1px;height:738px;background:#e2e2e2"></i><i style="left:670px;top:274px;width:1px;height:738px;background:#e2e2e2"></i><i style="left:915px;top:274px;width:1px;height:738px;background:#e2e2e2"></i><i style="left:993px;top:274px;width:1px;height:738px;background:#e2e2e2"></i><i style="left:1072px;top:274px;width:1px;height:738px;background:#e2e2e2"></i><i style="left:1151px;top:274px;width:1px;height:738px;background:#e2e2e2"></i><i style="left:1230px;top:274px;width:1px;height:738px;background:#e2e2e2"></i><i style="left:1308px;top:274px;width:1px;height:738px;background:#e2e2e2"></i><i style="left:1387px;top:274px;width:1px;height:738px;background:#e2e2e2"></i><i style="left:1466px;top:274px;width:1px;height:738px;background:#e2e2e2"></i><i style="left:1545px;top:274px;width:1px;height:738px;background:#e2e2e2"></i><i style="left:1623px;top:274px;width:1px;height:738px;background:#e2e2e2"></i><i style="left:1702px;top:274px;width:1px;height:738px;background:#e2e2e2"></i><i style="left:1781px;top:274px;width:1px;height:738px;background:#e2e2e2"></i><i style="left:1860px;top:274px;width:1px;height:738px;background:#e2e2e2"></i><i style="left:104px;top:291px;width:811px;height:50px;background:#fff"></i><i style="left:104px;top:393px;width:811px;height:65px;background:#fff"></i><i style="left:104px;top:459px;width:811px;height:48px;background:#fff"></i><i style="left:104px;top:542px;width:811px;height:113px;background:#fff"></i><i style="left:64px;top:359px;width:851px;height:16px;background:#fff"></i><i style="left:64px;top:508px;width:851px;height:16px;background:#fff"></i><i style="left:64px;top:673px;width:851px;height:16px;background:#fff"></i><i style="left:64px;top:690px;width:389px;height:16px;background:#fff"></i><i style="left:454px;top:690px;width:461px;height:16px;background:#fff"></i><i style="left:64px;top:707px;width:389px;height:16px;background:#fff"></i><i style="left:64px;top:826px;width:389px;height:16px;background:#fff"></i><i style="left:64px;top:843px;width:389px;height:16px;background:#fff"></i><i style="left:64px;top:860px;width:389px;height:16px;background:#fff"></i><i style="left:64px;top:894px;width:389px;height:16px;background:#fff"></i><i style="left:64px;top:911px;width:389px;height:16px;background:#fff"></i><i style="left:64px;top:724px;width:389px;height:101px;background:#fff"></i><i style="left:454px;top:707px;width:461px;height:16px;background:#fff"></i><i style="left:454px;top:724px;width:461px;height:16px;background:#fff"></i><i style="left:454px;top:741px;width:461px;height:16px;background:#fff"></i><i style="left:454px;top:758px;width:461px;height:16px;background:#fff"></i><i style="left:454px;top:775px;width:461px;height:16px;background:#fff"></i><i style="left:454px;top:792px;width:461px;height:16px;background:#fff"></i><i style="left:454px;top:809px;width:461px;height:16px;background:#fff"></i><i style="left:454px;top:826px;width:461px;height:16px;background:#fff"></i><i style="left:454px;top:843px;width:461px;height:16px;background:#fff"></i><i style="left:454px;top:894px;width:461px;height:16px;background:#fff"></i><i style="left:14px;top:257px;width:1872px;height:16px;background:linear-gradient(#ffffff,#ffffff 60%,#f1f1f1)"></i><i style="left:1073px;top:257px;width:78px;height:16px;background:linear-gradient(#f3f3f3,#ececec 70%,#e2e2e2)"></i><i style="left:14px;top:273px;width:1872px;height:1px;background:#a6a6a6"></i><i style="left:55px;top:257px;width:1px;height:16px;background:#a6a6a6"></i><i style="left:63px;top:257px;width:1px;height:16px;background:#a6a6a6"></i><i style="left:103px;top:257px;width:1px;height:16px;background:#a6a6a6"></i><i style="left:278px;top:257px;width:1px;height:16px;background:#a6a6a6"></i><i style="left:453px;top:257px;width:1px;height:16px;background:#a6a6a6"></i><i style="left:670px;top:257px;width:1px;height:16px;background:#a6a6a6"></i><i style="left:915px;top:257px;width:1px;height:16px;background:#a6a6a6"></i><i style="left:993px;top:257px;width:1px;height:16px;background:#a6a6a6"></i><i style="left:1072px;top:257px;width:1px;height:16px;background:#a6a6a6"></i><i style="left:1151px;top:257px;width:1px;height:16px;background:#a6a6a6"></i><i style="left:1230px;top:257px;width:1px;height:16px;background:#a6a6a6"></i><i style="left:1308px;top:257px;width:1px;height:16px;background:#a6a6a6"></i><i style="left:1387px;top:257px;width:1px;height:16px;background:#a6a6a6"></i><i style="left:1466px;top:257px;width:1px;height:16px;background:#a6a6a6"></i><i style="left:1545px;top:257px;width:1px;height:16px;background:#a6a6a6"></i><i style="left:1623px;top:257px;width:1px;height:16px;background:#a6a6a6"></i><i style="left:1702px;top:257px;width:1px;height:16px;background:#a6a6a6"></i><i style="left:1781px;top:257px;width:1px;height:16px;background:#a6a6a6"></i><i style="left:1860px;top:257px;width:1px;height:16px;background:#a6a6a6"></i><i style="left:14px;top:274px;width:41px;height:738px;background:linear-gradient(90deg,#ffffff,#ffffff 70%,#f4f4f4)"></i><i style="left:14px;top:741px;width:41px;height:16px;background:linear-gradient(90deg,#f3f3f3,#ececec 70%,#e2e2e2)"></i><i style="left:55px;top:257px;width:1px;height:755px;background:#a6a6a6"></i><i style="left:14px;top:290px;width:42px;height:1px;background:#a6a6a6"></i><i style="left:14px;top:307px;width:42px;height:1px;background:#a6a6a6"></i><i style="left:14px;top:324px;width:42px;height:1px;background:#a6a6a6"></i><i style="left:14px;top:341px;width:42px;height:1px;background:#a6a6a6"></i><i style="left:14px;top:358px;width:42px;height:1px;background:#a6a6a6"></i><i style="left:14px;top:375px;width:42px;height:1px;background:#a6a6a6"></i><i style="left:14px;top:392px;width:42px;height:1px;background:#a6a6a6"></i><i style="left:14px;top:414px;width:42px;height:1px;background:#a6a6a6"></i><i style="left:14px;top:436px;width:42px;height:1px;background:#a6a6a6"></i><i style="left:14px;top:458px;width:42px;height:1px;background:#a6a6a6"></i><i style="left:14px;top:507px;width:42px;height:1px;background:#a6a6a6"></i><i style="left:14px;top:524px;width:42px;height:1px;background:#a6a6a6"></i><i style="left:14px;top:541px;width:42px;height:1px;background:#a6a6a6"></i><i style="left:14px;top:579px;width:42px;height:1px;background:#a6a6a6"></i><i style="left:14px;top:617px;width:42px;height:1px;background:#a6a6a6"></i><i style="left:14px;top:655px;width:42px;height:1px;background:#a6a6a6"></i><i style="left:14px;top:672px;width:42px;height:1px;background:#a6a6a6"></i><i style="left:14px;top:689px;width:42px;height:1px;background:#a6a6a6"></i><i style="left:14px;top:706px;width:42px;height:1px;background:#a6a6a6"></i><i style="left:14px;top:723px;width:42px;height:1px;background:#a6a6a6"></i><i style="left:14px;top:740px;width:42px;height:1px;background:#a6a6a6"></i><i style="left:14px;top:757px;width:42px;height:1px;background:#a6a6a6"></i><i style="left:14px;top:774px;width:42px;height:1px;background:#a6a6a6"></i><i style="left:14px;top:791px;width:42px;height:1px;background:#a6a6a6"></i><i style="left:14px;top:808px;width:42px;height:1px;background:#a6a6a6"></i><i style="left:14px;top:825px;width:42px;height:1px;background:#a6a6a6"></i><i style="left:14px;top:842px;width:42px;height:1px;background:#a6a6a6"></i><i style="left:14px;top:859px;width:42px;height:1px;background:#a6a6a6"></i><i style="left:14px;top:876px;width:42px;height:1px;background:#a6a6a6"></i><i style="left:14px;top:893px;width:42px;height:1px;background:#a6a6a6"></i><i style="left:14px;top:910px;width:42px;height:1px;background:#a6a6a6"></i><i style="left:14px;top:927px;width:42px;height:1px;background:#a6a6a6"></i><i style="left:14px;top:944px;width:42px;height:1px;background:#a6a6a6"></i><i style="left:14px;top:961px;width:42px;height:1px;background:#a6a6a6"></i><i style="left:14px;top:978px;width:42px;height:1px;background:#a6a6a6"></i><i style="left:14px;top:995px;width:42px;height:1px;background:#a6a6a6"></i><i style="left:14px;top:1012px;width:42px;height:1px;background:#a6a6a6"></i><i style="left:63px;top:689px;width:853px;height:1px;background:#2e2e2e"></i><i style="left:63px;top:706px;width:853px;height:1px;background:#2e2e2e"></i><i style="left:63px;top:689px;width:1px;height:238px;background:#2e2e2e"></i><i style="left:453px;top:689px;width:1px;height:238px;background:#2e2e2e"></i><i style="left:915px;top:689px;width:1px;height:238px;background:#2e2e2e"></i><i style="left:56px;top:927px;width:1830px;height:1px;background:repeating-linear-gradient(90deg,#2e2e2e 0,#2e2e2e 7px,transparent 7px,transparent 8px)"></i><i style="left:993px;top:274px;width:1px;height:737px;background:repeating-linear-gradient(180deg,#2e2e2e 0,#2e2e2e 7px,transparent 7px,transparent 8px)"></i><i style="left:1069px;top:737px;width:86px;height:24px;box-sizing:border-box;border:2px solid #dcc257;background:#fff;box-shadow:inset 0 0 0 1px #fffbe3, 0 0 1px #fff3a8"></i></div>
<span class="t" style="left:56.46px;top:259px;font-size:12px;color:#222;">1</span>
<span class="t" style="left:80.46px;top:259px;font-size:12px;color:#222;">2</span>
<span class="t" style="left:187.96px;top:259px;font-size:12px;color:#222;">3</span>
<span class="t" style="left:362.96px;top:259px;font-size:12px;color:#222;">4</span>
<span class="t" style="left:558.96px;top:259px;font-size:12px;color:#222;">5</span>
<span class="t" style="left:789.96px;top:259px;font-size:12px;color:#222;">6</span>
<span class="t" style="left:951.46px;top:259px;font-size:12px;color:#222;">7</span>
<span class="t" style="left:1029.96px;top:259px;font-size:12px;color:#222;">8</span>
<span class="t" style="left:1108.96px;top:259px;font-size:12px;color:#222;">9</span>
<span class="t" style="left:1185.00px;top:259px;font-size:12px;color:#222;letter-spacing:-0.759px;">10</span>
<span class="t" style="left:1263.50px;top:259px;font-size:12px;color:#222;letter-spacing:0.131px;">11</span>
<span class="t" style="left:1342.00px;top:259px;font-size:12px;color:#222;letter-spacing:-0.759px;">12</span>
<span class="t" style="left:1421.00px;top:259px;font-size:12px;color:#222;letter-spacing:-0.759px;">13</span>
<span class="t" style="left:1500.00px;top:259px;font-size:12px;color:#222;letter-spacing:-0.759px;">14</span>
<span class="t" style="left:1578.50px;top:259px;font-size:12px;color:#222;letter-spacing:-0.759px;">15</span>
<span class="t" style="left:1657.00px;top:259px;font-size:12px;color:#222;letter-spacing:-0.759px;">16</span>
<span class="t" style="left:1736.00px;top:259px;font-size:12px;color:#222;letter-spacing:-0.759px;">17</span>
<span class="t" style="left:1815.00px;top:259px;font-size:12px;color:#222;letter-spacing:-0.759px;">18</span>
<span class="t" style="left:27.90px;top:275px;font-size:12px;color:#222;letter-spacing:-0.759px;">31</span>
<span class="t" style="left:27.90px;top:292px;font-size:12px;color:#222;letter-spacing:-0.759px;">32</span>
<span class="t" style="left:27.90px;top:309px;font-size:12px;color:#222;letter-spacing:-0.759px;">33</span>
<span class="t" style="left:27.90px;top:326px;font-size:12px;color:#222;letter-spacing:-0.759px;">34</span>
<span class="t" style="left:27.90px;top:343px;font-size:12px;color:#222;letter-spacing:-0.759px;">35</span>
<span class="t" style="left:27.90px;top:360px;font-size:12px;color:#222;letter-spacing:-0.759px;">36</span>
<span class="t" style="left:27.90px;top:377px;font-size:12px;color:#222;letter-spacing:-0.759px;">37</span>
<span class="t" style="left:27.90px;top:397px;font-size:12px;color:#222;letter-spacing:-0.759px;">38</span>
<span class="t" style="left:27.90px;top:419px;font-size:12px;color:#222;letter-spacing:-0.759px;">39</span>
<span class="t" style="left:27.90px;top:441px;font-size:12px;color:#222;letter-spacing:-0.759px;">40</span>
<span class="t" style="left:27.90px;top:476px;font-size:12px;color:#222;letter-spacing:-0.759px;">41</span>
<span class="t" style="left:27.90px;top:509px;font-size:12px;color:#222;letter-spacing:-0.759px;">42</span>
<span class="t" style="left:27.90px;top:526px;font-size:12px;color:#222;letter-spacing:-0.759px;">43</span>
<span class="t" style="left:27.90px;top:554px;font-size:12px;color:#222;letter-spacing:-0.759px;">44</span>
<span class="t" style="left:27.90px;top:592px;font-size:12px;color:#222;letter-spacing:-0.759px;">45</span>
<span class="t" style="left:27.90px;top:630px;font-size:12px;color:#222;letter-spacing:-0.759px;">46</span>
<span class="t" style="left:27.90px;top:657px;font-size:12px;color:#222;letter-spacing:-0.759px;">47</span>
<span class="t" style="left:27.90px;top:674px;font-size:12px;color:#222;letter-spacing:-0.759px;">48</span>
<span class="t" style="left:27.90px;top:691px;font-size:12px;color:#222;letter-spacing:-0.759px;">49</span>
<span class="t" style="left:27.90px;top:708px;font-size:12px;color:#222;letter-spacing:-0.759px;">50</span>
<span class="t" style="left:27.90px;top:725px;font-size:12px;color:#222;letter-spacing:-0.759px;">51</span>
<span class="t" style="left:27.90px;top:742px;font-size:12px;color:#222;letter-spacing:-0.759px;font-weight:bold;">52</span>
<span class="t" style="left:27.90px;top:759px;font-size:12px;color:#222;letter-spacing:-0.759px;">53</span>
<span class="t" style="left:27.90px;top:776px;font-size:12px;color:#222;letter-spacing:-0.759px;">54</span>
<span class="t" style="left:27.90px;top:793px;font-size:12px;color:#222;letter-spacing:-0.759px;">55</span>
<span class="t" style="left:27.90px;top:810px;font-size:12px;color:#222;letter-spacing:-0.759px;">56</span>
<span class="t" style="left:27.90px;top:827px;font-size:12px;color:#222;letter-spacing:-0.759px;">57</span>
<span class="t" style="left:27.90px;top:844px;font-size:12px;color:#222;letter-spacing:-0.759px;">58</span>
<span class="t" style="left:27.90px;top:861px;font-size:12px;color:#222;letter-spacing:-0.759px;">59</span>
<span class="t" style="left:27.90px;top:878px;font-size:12px;color:#222;letter-spacing:-0.759px;">60</span>
<span class="t" style="left:27.90px;top:895px;font-size:12px;color:#222;letter-spacing:-0.759px;">61</span>
<span class="t" style="left:27.90px;top:912px;font-size:12px;color:#222;letter-spacing:-0.759px;">62</span>
<span class="t" style="left:27.90px;top:929px;font-size:12px;color:#222;letter-spacing:-0.759px;">63</span>
<span class="t" style="left:27.90px;top:946px;font-size:12px;color:#222;letter-spacing:-0.759px;">64</span>
<span class="t" style="left:27.90px;top:963px;font-size:12px;color:#222;letter-spacing:-0.759px;">65</span>
<span class="t" style="left:27.90px;top:980px;font-size:12px;color:#222;letter-spacing:-0.759px;">66</span>
<span class="t" style="left:27.90px;top:997px;font-size:12px;color:#222;letter-spacing:-0.759px;">67</span>
<svg style="position:absolute;left:1889px;top:264px;" width="8" height="6" viewBox="0 0 8 6"><path d="M0.3 5 H7.3 L3.8 0.6 Z" fill="#555"/></svg>
<div style="position:absolute;left:1889px;top:279px;width:8px;height:712px;background:#d4d4d4;border-radius:4px;"></div>
<div style="position:absolute;left:1889px;top:597px;width:8px;height:393px;background:#9b9b9b;border-radius:4px;"></div>
<svg style="position:absolute;left:1889px;top:999px;" width="8" height="6" viewBox="0 0 8 6"><path d="M0.3 0.6 H7.3 L3.8 5 Z" fill="#555"/></svg>
<svg style="position:absolute;left:21.6px;top:1016.4px;" width="6" height="8" viewBox="0 0 6 8"><path d="M4.6 0.5 V6.9 L0.5 3.7 Z" fill="#c6c6c6"/></svg>
<div style="position:absolute;left:36px;top:1016px;width:1827px;height:8px;background:#d4d4d4;border-radius:4px;"></div>
<div style="position:absolute;left:36px;top:1016px;width:1694px;height:8px;background:#9b9b9b;border-radius:4px;"></div>
<svg style="position:absolute;left:1872.6px;top:1016.2px;" width="6" height="8" viewBox="0 0 6 8"><path d="M0.5 0.5 V6.9 L4.6 3.7 Z" fill="#444"/></svg>
<span class="t" style="left:107.60px;top:308px;font-size:13.5px;color:#363636;transform:scaleX(1.1157);transform-origin:0 0;">4.2. Цена услуг, с учетом обстоятельств во всякое время может быть изменена по соглашению сторон&gt;</span>
<span class="t" style="left:67.50px;top:360px;font-size:13.5px;color:#363636;transform:scaleX(1.1244);transform-origin:0 0;font-weight:bold;">5. Ответственность сторон и порядок разрешения споров</span>
<span class="t" style="left:107.60px;top:394px;font-size:13.5px;color:#363636;transform:scaleX(1.1071);transform-origin:0 0;">5.1. В случае нарушения принятых на себя обязательств по настоящему договору стороны несут ответственность</span>
<span class="t" style="left:107.60px;top:410px;font-size:13.5px;color:#363636;transform:scaleX(1.1120);transform-origin:0 0;">в соответствии с действующим законодательством.</span>
<span class="t" style="left:107.60px;top:426px;font-size:13.5px;color:#363636;transform:scaleX(1.1146);transform-origin:0 0;">5.2. Все споры, которые могут возникнуть из настоящего договора или в связи с ним, подлежат рассмотрению в</span>
<span class="t" style="left:107.60px;top:442px;font-size:13.5px;color:#363636;transform:scaleX(1.1002);transform-origin:0 0;">установленном законом порядке.</span>
<span class="t" style="left:107.60px;top:460px;font-size:13.5px;color:#363636;transform:scaleX(1.1165);transform-origin:0 0;">5.3. Исполнитель несет ответственность за свои действия во время оказания услуг на Объекте Заказчика,</span>
<span class="t" style="left:107.60px;top:476px;font-size:13.5px;color:#363636;transform:scaleX(1.1130);transform-origin:0 0;">касающихся безопасности условий труда , соблюдения правил техники безопасности , противопожарной</span>
<span class="t" style="left:107.60px;top:492px;font-size:13.5px;color:#363636;transform:scaleX(1.1124);transform-origin:0 0;">безопасности и санитарно-гигиенических правил.</span>
<span class="t" style="left:67.50px;top:509px;font-size:13.5px;color:#363636;transform:scaleX(1.1142);transform-origin:0 0;font-weight:bold;">6. Действие договора и условия прекращения договора</span>
<span class="t" style="left:107.60px;top:543px;font-size:13.5px;color:#363636;transform:scaleX(1.1092);transform-origin:0 0;">6.1. Настоящий договор вступает в силу с момента его подписания и действует до исполнения сторонами своих</span>
<span class="t" style="left:107.60px;top:559px;font-size:13.5px;color:#363636;transform:scaleX(1.1136);transform-origin:0 0;">обязательств по нему.</span>
<span class="t" style="left:107.60px;top:575px;font-size:13.5px;color:#363636;transform:scaleX(1.1116);transform-origin:0 0;">6.2. Настоящий договор составлен в двух экземплярах (по одному для каждой из его сторон), имеющих</span>
<span class="t" style="left:107.60px;top:591px;font-size:13.5px;color:#363636;transform:scaleX(1.1257);transform-origin:0 0;">одинаковую юридическую силу.</span>
<span class="t" style="left:107.60px;top:607px;font-size:13.5px;color:#363636;transform:scaleX(1.1077);transform-origin:0 0;">6.3. Настоящий договор может быть расторгнут:</span>
<span class="t" style="left:107.60px;top:623px;font-size:13.5px;color:#363636;transform:scaleX(1.1040);transform-origin:0 0;">6.3.1. По взаимному согласию сторон,</span>
<span class="t" style="left:107.60px;top:639px;font-size:13.5px;color:#363636;transform:scaleX(1.0940);transform-origin:0 0;">6.3.2. По другим основаниям, предусмотренным действующим законодательством.</span>
<span class="t" style="left:67.50px;top:674px;font-size:13.5px;color:#363636;transform:scaleX(1.1032);transform-origin:0 0;font-weight:bold;">Адреса и реквизиты сторон</span>
<div style="position:absolute;left:104px;top:291px;width:811px;height:17px;overflow:hidden"><span class="t" style="left:4.30px;top:1px;font-size:13.5px;color:#363636;transform:scaleX(1.1016);transform-origin:0 0;">&lt;4.1. По настоящему договору Заказчик выплачивает  Исполнителю вознаграждение в размере суммы по Акту выпо</span></div>
<span class="t" style="left:220.20px;top:691px;font-size:13.5px;color:#363636;transform:scaleX(1.0618);transform-origin:0 0;font-weight:bold;">ЗАКАЗЧИК</span>
<span class="t" style="left:628.25px;top:691px;font-size:13.5px;color:#363636;transform:scaleX(1.0652);transform-origin:0 0;font-weight:bold;">ИСПОЛНИТЕЛЬ</span>
<span class="t" style="left:67.80px;top:708px;font-size:13.5px;color:#363636;transform:scaleX(1.0764);transform-origin:0 0;">&lt;НазваниеОрганизации&gt;</span>
<span class="t" style="left:67.80px;top:725px;font-size:13.5px;color:#363636;transform:scaleX(1.1047);transform-origin:0 0;">&lt;Юридический адрес: [АдресОрганизации]</span>
<span class="t" style="left:67.50px;top:741px;font-size:13.5px;color:#363636;transform:scaleX(1.0025);transform-origin:0 0;">ОГРН [ОГРН]</span>
<span class="t" style="left:67.50px;top:757px;font-size:13.5px;color:#363636;transform:scaleX(1.0370);transform-origin:0 0;">ОКВЭД [ОКВЭД]</span>
<span class="t" style="left:67.50px;top:773px;font-size:13.5px;color:#363636;transform:scaleX(1.0156);transform-origin:0 0;">[ИНН_КПП]</span>
<div style="position:absolute;left:64px;top:788px;width:389px;height:17px;overflow:hidden"><span class="t" style="left:3.50px;top:1px;font-size:13.5px;color:#363636;transform:scaleX(1.0476);transform-origin:0 0;">р/с 40702810320610001159 В ФИЛИАЛЕ  "ЦЕНТРАЛЬНЫЙ</span></div>
<span class="t" style="left:137.30px;top:844px;font-size:13.5px;color:#363636;transform:scaleX(1.1126);transform-origin:0 0;">&lt;[З_Должность]</span>
<span class="t" style="left:253.30px;top:844px;font-size:13.5px;color:#363636;transform:scaleX(0.9234);transform-origin:0 0;">_______________</span>
<span class="t" style="left:362.70px;top:844px;font-size:13.5px;color:#363636;transform:scaleX(1.0924);transform-origin:0 0;">[З_ФИО]&gt;</span>
<span class="t" style="left:107.30px;top:878px;font-size:13.5px;color:#363636;transform:scaleX(1.0298);transform-origin:0 0;">М.П.</span>
<span class="t" style="left:185.30px;top:895px;font-size:13.5px;color:#363636;transform:scaleX(1.0751);transform-origin:0 0;">"____"</span>
<span class="t" style="left:232.30px;top:895px;font-size:13.5px;color:#363636;transform:scaleX(0.9056);transform-origin:0 0;">____________________</span>
<span class="t" style="left:373.30px;top:895px;font-size:13.5px;color:#363636;transform:scaleX(1.0813);transform-origin:0 0;">20___</span>
<span class="t" style="left:417.70px;top:895px;font-size:13.5px;color:#363636;transform:scaleX(1.5076);transform-origin:0 0;">г.</span>
<span class="t" style="left:458.30px;top:708px;font-size:13.5px;color:#363636;transform:scaleX(1.0614);transform-origin:0 0;">&lt;РаботникНаименованиеПолное&gt;</span>
<span class="t" style="left:458.30px;top:725px;font-size:13.5px;color:#363636;transform:scaleX(1.1240);transform-origin:0 0;">&lt;[ДатаРождения]&gt;</span>
<span class="t" style="left:458.30px;top:742px;font-size:13.5px;color:#363636;transform:scaleX(1.1236);transform-origin:0 0;">&lt;Документ: [ДокументВид]&gt;</span>
<span class="t" style="left:458.30px;top:759px;font-size:13.5px;color:#363636;transform:scaleX(1.1063);transform-origin:0 0;">&lt;Серия: [ДокументСерия] Номер: [ДокументНомер]&gt;</span>
<span class="t" style="left:458.30px;top:776px;font-size:13.5px;color:#363636;transform:scaleX(1.1182);transform-origin:0 0;">&lt;Адрес: [АдресСотрудника]&gt;</span>
<span class="t" style="left:458.30px;top:793px;font-size:13.5px;color:#363636;transform:scaleX(1.0659);transform-origin:0 0;">&lt;ИНН: [ИНН_Исполнителя]&gt;</span>
<span class="t" style="left:458.30px;top:810px;font-size:13.5px;color:#363636;transform:scaleX(1.0820);transform-origin:0 0;">&lt;Страховое свидетельство №[СНИЛС]&gt;</span>
<span class="t" style="left:706.10px;top:844px;font-size:13.5px;color:#363636;">&lt;</span>
<span class="t" style="left:714.00px;top:844px;font-size:13.5px;color:#363636;transform:scaleX(0.9252);transform-origin:0 0;">_______________</span>
<span class="t" style="left:823.30px;top:844px;font-size:13.5px;color:#363636;transform:scaleX(1.0875);transform-origin:0 0;">[И_ФИО]&gt;</span>
<span class="t" style="left:647.00px;top:895px;font-size:13.5px;color:#363636;transform:scaleX(1.0801);transform-origin:0 0;">"____"</span>
<span class="t" style="left:693.90px;top:895px;font-size:13.5px;color:#363636;transform:scaleX(0.9090);transform-origin:0 0;">____________________</span>
<span class="t" style="left:835.30px;top:895px;font-size:13.5px;color:#363636;transform:scaleX(1.0707);transform-origin:0 0;">20___</span>
<span class="t" style="left:880.10px;top:895px;font-size:13.5px;color:#363636;transform:scaleX(1.4933);transform-origin:0 0;">г.</span>
<div style="position:absolute;left:0px;top:1040px;width:1920px;height:40px;background:#05050b;"></div>
<svg style="position:absolute;left:15.5px;top:1052px;" width="17" height="16" viewBox="0 0 17 16"><g fill="#fff"><path d="M0 2.3 L7.2 1.3 V7.6 H0 Z"/><path d="M8.2 1.15 L16.7 0 V7.6 H8.2 Z"/><path d="M0 8.5 H7.2 V14.8 L0 13.8 Z"/><path d="M8.2 8.5 H16.7 V16 L8.2 14.9 Z"/></g></svg>
<svg style="position:absolute;left:63px;top:1051px;" width="18" height="18" viewBox="0 0 18 18"><circle cx="11.2" cy="6.7" r="5.3" fill="none" stroke="#fff" stroke-width="1.3"/><path d="M7.6 10.6 L1.2 17" stroke="#fff" stroke-width="1.5"/></svg>
<svg style="position:absolute;left:111.5px;top:1052px;" width="17" height="16" viewBox="0 0 17 16"><g fill="none" stroke="#fff" stroke-width="1.2"><rect x="1.8" y="4.6" width="9" height="6.4"/><path d="M0.6 3.2V0.8H12V3.2M0.6 12.4V14.8H12V12.4"/><path d="M15.2 0.4V3.4M15.2 8V15.2"/></g><rect x="13.8" y="4.4" width="2.8" height="2.6" fill="#fff"/></svg>
<svg style="position:absolute;left:159.5px;top:1051px;" width="22" height="18" viewBox="0 0 22 18"><path d="M0.5 1.2 H7.2 L8.6 2.8 H21 V17 H0.5 Z" fill="#f6d67a"/><path d="M0.5 4 H21 V17 H0.5 Z" fill="#fbe39a"/><path d="M4.2 17 V10.2 H17.4 V17 H14.2 V13.2 H7.4 V17 Z" fill="#3aa0e0"/><rect x="4.2" y="10.2" width="13.2" height="1.6" fill="#2b8ad0"/></svg>
<svg style="position:absolute;left:208px;top:1047px;" width="24" height="25" viewBox="0 0 24 25"><circle cx="12.4" cy="12.8" r="8.6" fill="#2ea7e6"/><circle cx="12.4" cy="12.8" r="4.2" fill="#05050b"/><rect x="8" y="11.4" width="13" height="2.6" fill="#2ea7e6"/><rect x="12.4" y="14" width="9.4" height="3" fill="#05050b"/><path d="M16.8 17.6 L21 16.4 L19.6 19.4Z" fill="#2ea7e6"/><path d="M2.4 20.8 C-1.6 17 6 6.4 14.6 3 C19.6 1 22.6 2.6 21.6 6" fill="none" stroke="#f2c229" stroke-width="1.7"/></svg>
<svg style="position:absolute;left:256.8px;top:1047.7px;" width="24" height="24" viewBox="0 0 24 24"><circle cx="12" cy="12" r="12" fill="#fff"/><path d="M5.6 5.4 L12 12.4 V20.2" fill="none" stroke="#f5512b" stroke-width="3.3" stroke-linecap="butt" stroke-linejoin="round"/><path d="M12 12.4 L18.4 5.6" stroke="#ee4f86" stroke-width="3.3"/></svg>
<svg style="position:absolute;left:306px;top:1048px;" width="24" height="24" viewBox="0 0 24 24"><rect x="0.8" y="0.8" width="10.6" height="19.6" fill="#3aa0e0" stroke="#bfe2f7" stroke-width="0.8"/><rect x="0.8" y="5.4" width="10.6" height="0.9" fill="#bfe2f7"/><path d="M9.2 13.4 V11.4 H15.6 V13.4" fill="none" stroke="#e8eef3" stroke-width="1.3"/><rect x="4.8" y="13.2" width="18.6" height="9.8" rx="1" fill="#6e8ea8" stroke="#e8eef3" stroke-width="0.9"/><rect x="4.8" y="15.4" width="18.6" height="1.2" fill="#cfdbe5"/></svg>
<svg style="position:absolute;left:357.5px;top:1049px;" width="17" height="22" viewBox="0 0 17 22"><rect x="1.8" y="0.8" width="14" height="20" rx="1" fill="#7f8fc0" stroke="#aab6dc" stroke-width="0.8"/><rect x="3.6" y="2" width="10.6" height="17.6" fill="#8e9ccc"/><path d="M1 3H3M1 5.6H3M1 8.2H3M1 10.8H3M1 13.4H3M1 16H3M1 18.6H3" stroke="#d5d9e6" stroke-width="0.9"/><path d="M9.2 4.6 L12.2 9.6 H6.2 Z" fill="#f4d03a"/><circle cx="9" cy="14.6" r="2.7" fill="#e0303c"/><path d="M7.9 13.5L10.1 15.7M10.1 13.5L7.9 15.7" stroke="#fff" stroke-width="0.9"/></svg>
<svg style="position:absolute;left:404px;top:1049.5px;" width="24" height="22" viewBox="0 0 24 22"><path d="M1.4 6 L5 4.4 V15.6 L1.4 14.6 Z" fill="#b9c2cb"/><path d="M5.4 2.2 L22.6 0.6 L21.4 15.2 L6.2 15.8 Z" fill="#dfe6ee" stroke="#9aa5b1" stroke-width="0.8"/><path d="M7.2 3.8 L20.8 2.6 L19.9 13.6 L7.8 14.2 Z" fill="#cfe2f5"/><path d="M7.8 12 L10 11 L11.4 5.8 L12.8 11 L14.4 9.4 L16 4.8 L17.6 11.4 L19.8 10" fill="none" stroke="#2f78c4" stroke-width="1"/><path d="M10.6 16 L12.2 18.8 H16.6 L16 16" fill="#aeb6bf"/><ellipse cx="14.2" cy="19.8" rx="5.2" ry="1.8" fill="#d4d9df"/></svg>
<div style="position:absolute;left:441px;top:1040px;width:48px;height:40px;background:#37373c;"></div>
<div style="position:absolute;left:488.5px;top:1040px;width:1.5px;height:40px;background:#26262b;"></div>
<svg style="position:absolute;left:452.8px;top:1048px;" width="24" height="24" viewBox="0 0 24 24"><circle cx="12" cy="12" r="12" fill="#fbd313"/><circle cx="12" cy="11" r="10.4" fill="#ffe03a" opacity=".55"/><g fill="none" stroke="#e1251b" stroke-width="1.35"><path d="M4.2 9.4 L6.6 7.4 V15.6"/><path d="M20.6 15.2 H12.6 A3.8 3.8 0 1 1 15.8 9.4"/><path d="M20.6 12.9 H12.8 A1.6 1.6 0 1 1 14 10.4" stroke-width="1.1"/></g></svg>
<div style="position:absolute;left:249px;top:1078px;width:40px;height:2px;background:#76b9ed;"></div>
<div style="position:absolute;left:298px;top:1078px;width:40px;height:2px;background:#76b9ed;"></div>
<div style="position:absolute;left:347px;top:1078px;width:40px;height:2px;background:#76b9ed;"></div>
<div style="position:absolute;left:396px;top:1078px;width:40px;height:2px;background:#76b9ed;"></div>
<div style="position:absolute;left:441px;top:1078px;width:48px;height:2px;background:#76b9ed;"></div>
<svg style="position:absolute;left:1698px;top:1055px;" width="14" height="9" viewBox="0 0 14 9"><path d="M0.8 8 L6.8 1.4 L12.8 8" fill="none" stroke="#fff" stroke-width="1.3"/></svg>
<svg style="position:absolute;left:1720px;top:1053px;" width="18" height="15" viewBox="0 0 18 15"><g fill="none" stroke="#fff" stroke-width="1.1"><rect x="3.6" y="1.6" width="13.4" height="8.4"/><path d="M10.4 10V13.4M6.4 13.6H14.4"/><rect x="0.6" y="0.6" width="3.6" height="3.2"/><path d="M2.4 3.8V13.6"/></g></svg>
<svg style="position:absolute;left:1745px;top:1053px;" width="17" height="15" viewBox="0 0 17 15"><g fill="none" stroke="#fff" stroke-width="1.1"><path d="M0.8 5.2 H3.6 L7.2 1.6 V13.4 L3.6 9.8 H0.8 Z"/><path d="M9.4 5.2 A3.4 3.4 0 0 1 9.4 9.8M11.4 3.4 A5.8 5.8 0 0 1 11.4 11.6M13.6 1.6 A8.4 8.4 0 0 1 13.6 13.4"/></g></svg>
<span class="t" style="left:1772.60px;top:1044px;font-size:11.6px;color:#fff;letter-spacing:-1.009px;">РУС</span>
<span class="t" style="left:1775.20px;top:1061px;font-size:11.6px;color:#fff;letter-spacing:-2.350px;">RU</span>
<span class="t" style="left:1820.40px;top:1044px;font-size:11.6px;color:#fff;letter-spacing:-0.239px;">11:47</span>
<span class="t" style="left:1807.20px;top:1061px;font-size:11.6px;color:#fff;letter-spacing:-0.426px;">26.02.2025</span>
<svg style="position:absolute;left:1878.5px;top:1052px;" width="17" height="16" viewBox="0 0 17 16"><path d="M0.8 0.8 H16 V11.6 H10.6 L8.4 14.6 L6.2 11.6 H0.8 Z" fill="none" stroke="#fff" stroke-width="1.2"/></svg>
<div style="position:absolute;left:1916px;top:1040px;width:1px;height:40px;background:#6a6a6a;"></div>
</body></html>
